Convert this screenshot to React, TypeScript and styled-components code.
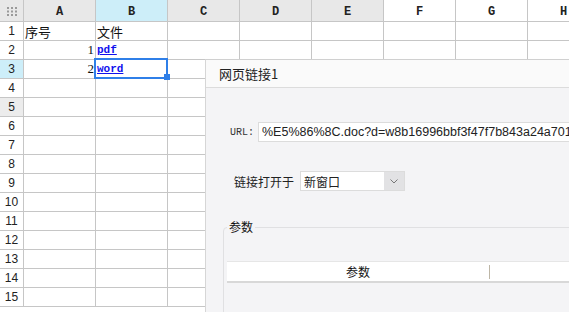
import React from 'react'
import styled, { createGlobalStyle } from 'styled-components'

const GlobalStyle = createGlobalStyle`
  html, body {
    margin: 0;
    padding: 0;
    background: #ffffff;
    overflow: hidden;
  }
  body {
    font-family: "Noto Sans CJK SC", "Liberation Sans", sans-serif;
  }
`

const Screen = styled.div`
  position: relative;
  width: 569px;
  height: 312px;
  overflow: hidden;
  background: #ffffff;
`

const Sheet = styled.div`
  display: grid;
  grid-template-columns: 24px repeat(8, 72px);
  grid-template-rows: 22px;
  grid-auto-rows: 19px;
  width: 600px;
`

const Cell = styled.div<{ $bg?: string; $align?: string }>`
  box-sizing: border-box;
  border-right: 1px solid #c6c6c6;
  border-bottom: 1px solid #c6c6c6;
  background: ${({ $bg }) => $bg || '#ffffff'};
  display: flex;
  align-items: center;
  justify-content: ${({ $align }) => $align || 'flex-start'};
  padding: 0 1px;
  font-size: 13px;
  color: #111;
  white-space: nowrap;
  overflow: hidden;
`

const ColHead = styled(Cell)`
  justify-content: center;
  font-family: "Liberation Mono", monospace;
  font-size: 12px;
  font-weight: bold;
  color: #222;
  padding-top: 2px;
`

const RowHead = styled(Cell)`
  justify-content: center;
  font-family: "Liberation Sans", sans-serif;
  font-size: 12px;
  color: #222;
`

const Num = styled.span`
  font-family: "Liberation Serif", serif;
  font-size: 13px;
`

const Link = styled.span`
  font-family: "Liberation Mono", monospace;
  font-size: 11px;
  font-weight: bold;
  color: #1010ee;
  text-decoration: underline;
`

const Selection = styled.div`
  position: absolute;
  left: 94px;
  top: 58px;
  width: 74px;
  height: 21px;
  box-sizing: border-box;
  border: 2px solid #2f7fe8;
  pointer-events: none;
`

const Handle = styled.div`
  position: absolute;
  right: -4px;
  bottom: -3px;
  width: 6px;
  height: 6px;
  background: #2f7fe8;
`

const Dialog = styled.div`
  position: absolute;
  left: 205px;
  top: 59px;
  width: 480px;
  height: 300px;
  box-sizing: border-box;
  border-left: 1px solid #d6d6d6;
  border-top: 1px solid #d0d0d0;
  background: #f4f4f6;
  display: flex;
  flex-direction: column;
`

const TitleBar = styled.div`
  height: 28px;
  box-sizing: border-box;
  background: #fafafa;
  border-bottom: 1px solid #dcdcdc;
  display: flex;
  align-items: center;
  padding-left: 13px;
  font-size: 13px;
  color: #222;
`

const Body = styled.div`
  display: flex;
  flex-direction: column;
  padding: 34px 0 0 24px;
`

const UrlRow = styled.div`
  display: flex;
  align-items: center;
  height: 20px;
`

const UrlLabel = styled.span`
  width: 28px;
  font-family: "Liberation Mono", monospace;
  font-size: 10px;
  color: #333;
`

const UrlInput = styled.div`
  flex: 1;
  height: 20px;
  box-sizing: border-box;
  background: #ffffff;
  border: 1px solid #dcdcdc;
  display: flex;
  align-items: center;
  padding-left: 3px;
  font-family: "Liberation Sans", sans-serif;
  font-size: 12.5px;
  color: #222;
  white-space: nowrap;
  overflow: hidden;
`

const OpenRow = styled.div`
  display: flex;
  align-items: center;
  gap: 6px;
  margin-top: 29px;
  padding-left: 4px;
  height: 20px;
  font-size: 12px;
  color: #222;
`

const Select = styled.div`
  display: flex;
  width: 105px;
  height: 20px;
  box-sizing: border-box;
  border: 1px solid #dcdcdc;
  background: #ffffff;
`

const SelectValue = styled.span`
  flex: 1;
  display: flex;
  align-items: center;
  padding-left: 3px;
  font-size: 12px;
`

const SelectButton = styled.span`
  width: 20px;
  background: #e2e2e4;
  display: flex;
  align-items: center;
  justify-content: center;
`

const Group = styled.fieldset`
  margin: 29px 0 0 -7px;
  padding: 0 0 0 3px;
  border: 1px solid #e0e0e2;
  border-radius: 4px;
  height: 120px;
  min-width: 0;
`

const Legend = styled.legend`
  padding: 0 2px;
  font-size: 12px;
  line-height: 14px;
  color: #111;
`

const TableHead = styled.div`
  display: flex;
  margin-top: 27px;
  height: 22px;
  box-sizing: border-box;
  background: #ffffff;
  border-top: 1px solid #e6e6e6;
  border-bottom: 2px solid #d8d8d8;
`

const HeadCol = styled.div<{ $w: number }>`
  width: ${({ $w }) => $w}px;
  flex-shrink: 0;
  display: flex;
  align-items: center;
  justify-content: center;
  font-size: 12px;
  color: #111;
`

const HeadDivider = styled.span`
  width: 1px;
  height: 14px;
  align-self: center;
  background: #bdb6a6;
  flex-shrink: 0;
`

const GridIcon = () => (
  <svg width="12" height="10" viewBox="0 0 12 10">
    {[0, 1, 2].map((r) =>
      [0, 1, 2].map((c) => (
        <rect key={`${r}-${c}`} x={c * 4 + 1} y={r * 3.5 + 1} width="2" height="2" fill="#9a9a9a" />
      ))
    )}
  </svg>
)

const Chevron = () => (
  <svg width="8" height="5" viewBox="0 0 8 5">
    <path d="M0.5 0.5 L4 4 L7.5 0.5" fill="none" stroke="#777" strokeWidth="1" />
  </svg>
)

const columns = ['A', 'B', 'C', 'D', 'E', 'F', 'G', 'H']
const headBg = (col: string) => {
  if (col === 'B') return '#cdeef9'
  if (['F', 'G', 'H'].includes(col)) return '#ffffff'
  return '#e8e8e8'
}
const rowBg = (row: number) => {
  if (row === 3) return '#cdeef9'
  if (row === 5) return '#ececec'
  return '#ffffff'
}

const cellContent = (row: number, col: string) => {
  if (row === 1 && col === 'A') return '序号'
  if (row === 1 && col === 'B') return '文件'
  if (row === 2 && col === 'A') return <Num>1</Num>
  if (row === 3 && col === 'A') return <Num>2</Num>
  if (row === 2 && col === 'B') return <Link>pdf</Link>
  if (row === 3 && col === 'B') return <Link>word</Link>
  return null
}

export default function App() {
  const rows = Array.from({ length: 15 }, (_, i) => i + 1)

  return (
    <Screen>
      <GlobalStyle />
      <Sheet>
        <Cell $bg="#e8e8e8" $align="center">
          <GridIcon />
        </Cell>
        {columns.map((col) => (
          <ColHead key={col} $bg={headBg(col)}>
            {col}
          </ColHead>
        ))}
        {rows.map((row) => (
          <React.Fragment key={row}>
            <RowHead $bg={rowBg(row)}>{row}</RowHead>
            {columns.map((col) => (
              <Cell
                key={col}
                $align={col === 'A' && (row === 2 || row === 3) ? 'flex-end' : 'flex-start'}
              >
                {cellContent(row, col)}
              </Cell>
            ))}
          </React.Fragment>
        ))}
      </Sheet>

      <Selection>
        <Handle />
      </Selection>

      <Dialog>
        <TitleBar>网页链接1</TitleBar>
        <Body>
          <UrlRow>
            <UrlLabel>URL:</UrlLabel>
            <UrlInput>%E5%86%8C.doc?d=w8b16996bbf3f47f7b843a24a701</UrlInput>
          </UrlRow>
          <OpenRow>
            <span>链接打开于</span>
            <Select>
              <SelectValue>新窗口</SelectValue>
              <SelectButton>
                <Chevron />
              </SelectButton>
            </Select>
          </OpenRow>
          <Group>
            <Legend>参数</Legend>
            <TableHead>
              <HeadCol $w={262}>参数</HeadCol>
              <HeadDivider />
              <HeadCol $w={200}></HeadCol>
            </TableHead>
          </Group>
        </Body>
      </Dialog>
    </Screen>
  )
}
